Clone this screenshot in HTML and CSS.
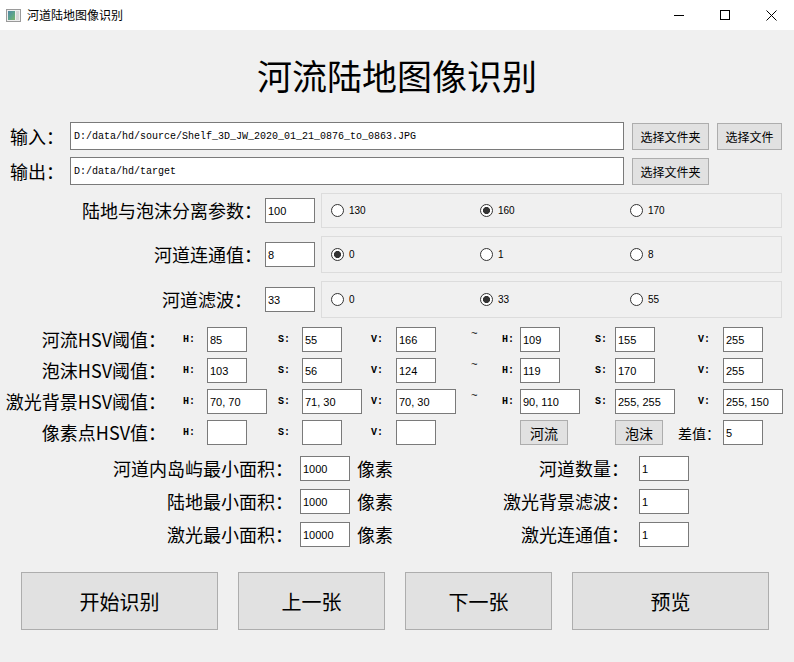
FILE: index.html
```html
<!DOCTYPE html>
<html lang="zh-CN">
<head>
<meta charset="utf-8">
<title>河道陆地图像识别</title>
<link rel="stylesheet" href="styles.css">
</head>
<body>
<div class="window">
  <header class="titlebar">
    <svg class="app-icon" width="15" height="13" viewBox="0 0 15 13">
      <defs>
        <linearGradient id="pic" x1="0" y1="0" x2="1" y2="1">
          <stop offset="0" stop-color="#4f86a6"/>
          <stop offset="0.55" stop-color="#5ea58a"/>
          <stop offset="1" stop-color="#7cb46a"/>
        </linearGradient>
      </defs>
      <rect x="0.5" y="0.5" width="14" height="12" fill="#eeeeee" stroke="#9a9a9a"/>
      <rect x="2" y="2" width="7" height="9" fill="url(#pic)"/>
      <rect x="10" y="2" width="3" height="9" fill="#d6d6d6"/>
    </svg>
    <span class="title-text">河道陆地图像识别</span>
    <div class="win-controls">
      <span class="win-btn"><svg width="10" height="10" viewBox="0 0 10 10"><path d="M0 5.5H10" stroke="#000" stroke-width="1"/></svg></span>
      <span class="win-btn"><svg width="10" height="10" viewBox="0 0 10 10"><rect x="0.5" y="0.5" width="9" height="9" fill="none" stroke="#000"/></svg></span>
      <span class="win-btn"><svg width="11" height="11" viewBox="0 0 11 11"><path d="M0.5 0.5L10.5 10.5M10.5 0.5L0.5 10.5" stroke="#000" stroke-width="1"/></svg></span>
    </div>
  </header>

  <main class="content">
    <h1 class="app-title">河流陆地图像识别</h1>

    <div class="path-row">
      <span class="path-label">输入：</span>
      <input class="field path-field" type="text" value="D:/data/hd/source/Shelf_3D_JW_2020_01_21_0876_to_0863.JPG">
      <button class="btn btn-small btn-folder">选择文件夹</button>
      <button class="btn btn-small btn-file">选择文件</button>
    </div>
    <div class="path-row">
      <span class="path-label">输出：</span>
      <input class="field path-field" type="text" value="D:/data/hd/target">
      <button class="btn btn-small btn-folder">选择文件夹</button>
    </div>

    <div class="param-row row-a">
      <span class="param-label">陆地与泡沫分离参数：</span>
      <input class="field num-field param-field" type="text" value="100">
      <div class="group">
        <label class="radio"><input type="radio" name="sep"><span>130</span></label>
        <label class="radio"><input type="radio" name="sep" checked><span>160</span></label>
        <label class="radio"><input type="radio" name="sep"><span>170</span></label>
      </div>
    </div>
    <div class="param-row row-b">
      <span class="param-label">河道连通值：</span>
      <input class="field num-field param-field" type="text" value="8">
      <div class="group">
        <label class="radio"><input type="radio" name="conn" checked><span>0</span></label>
        <label class="radio"><input type="radio" name="conn"><span>1</span></label>
        <label class="radio"><input type="radio" name="conn"><span>8</span></label>
      </div>
    </div>
    <div class="param-row row-c">
      <span class="param-label param-label-short">河道滤波：</span>
      <input class="field num-field param-field" type="text" value="33">
      <div class="group">
        <label class="radio"><input type="radio" name="filt"><span>0</span></label>
        <label class="radio"><input type="radio" name="filt" checked><span>33</span></label>
        <label class="radio"><input type="radio" name="filt"><span>55</span></label>
      </div>
    </div>

    <div class="hsv-grid">
      <span class="hsv-label">河流HSV阈值：</span>
      <span class="chan chan-first">H:</span><input class="field num-field" type="text" value="85">
      <span class="chan">S:</span><input class="field num-field" type="text" value="55">
      <span class="chan">V:</span><input class="field num-field" type="text" value="166">
      <span class="tilde">~</span>
      <span class="chan">H:</span><input class="field num-field" type="text" value="109">
      <span class="chan">S:</span><input class="field num-field" type="text" value="155">
      <span class="chan">V:</span><input class="field num-field" type="text" value="255">

      <span class="hsv-label">泡沫HSV阈值：</span>
      <span class="chan chan-first">H:</span><input class="field num-field" type="text" value="103">
      <span class="chan">S:</span><input class="field num-field" type="text" value="56">
      <span class="chan">V:</span><input class="field num-field" type="text" value="124">
      <span class="tilde">~</span>
      <span class="chan">H:</span><input class="field num-field" type="text" value="119">
      <span class="chan">S:</span><input class="field num-field" type="text" value="170">
      <span class="chan">V:</span><input class="field num-field" type="text" value="255">

      <span class="hsv-label">激光背景HSV阈值：</span>
      <span class="chan chan-first">H:</span><input class="field num-field wide" type="text" value="70, 70">
      <span class="chan">S:</span><input class="field num-field wide" type="text" value="71, 30">
      <span class="chan">V:</span><input class="field num-field wide" type="text" value="70, 30">
      <span class="tilde">~</span>
      <span class="chan">H:</span><input class="field num-field wide" type="text" value="90, 110">
      <span class="chan">S:</span><input class="field num-field wide" type="text" value="255, 255">
      <span class="chan">V:</span><input class="field num-field wide" type="text" value="255, 150">

      <span class="hsv-label">像素点HSV值：</span>
      <span class="chan chan-first">H:</span><input class="field num-field" type="text" value="">
      <span class="chan">S:</span><input class="field num-field" type="text" value="">
      <span class="chan">V:</span><input class="field num-field" type="text" value="">
      <span class="gap-cell"></span>
      <span class="gap-cell"></span>
      <button class="btn btn-pick">河流</button>
      <span class="gap-cell"></span>
      <div class="diff-cell">
        <button class="btn btn-pick">泡沫</button>
        <span class="diff-label">差值：</span>
      </div>
      <input class="field num-field" type="text" value="5">
    </div>

    <div class="area-grid">
      <span class="area-label">河道内岛屿最小面积：</span>
      <input class="field num-field area-field" type="text" value="1000">
      <span class="unit">像素</span>
      <span class="area-label">河道数量：</span>
      <input class="field num-field area-field-r" type="text" value="1">

      <span class="area-label">陆地最小面积：</span>
      <input class="field num-field area-field" type="text" value="1000">
      <span class="unit">像素</span>
      <span class="area-label">激光背景滤波：</span>
      <input class="field num-field area-field-r" type="text" value="1">

      <span class="area-label">激光最小面积：</span>
      <input class="field num-field area-field" type="text" value="10000">
      <span class="unit">像素</span>
      <span class="area-label">激光连通值：</span>
      <input class="field num-field area-field-r" type="text" value="1">
    </div>

    <div class="action-row">
      <button class="btn btn-big btn-wide">开始识别</button>
      <button class="btn btn-big btn-mid">上一张</button>
      <button class="btn btn-big btn-mid">下一张</button>
      <button class="btn btn-big btn-wide">预览</button>
    </div>
  </main>
</div>
</body>
</html>
```

FILE: styles.css
```css
* {
  box-sizing: border-box;
}

html, body {
  margin: 0;
  padding: 0;
}

body {
  width: 794px;
  height: 662px;
  overflow: hidden;
  background: #f0f0f0;
  font-family: "Noto Sans CJK SC", "Noto Sans", sans-serif;
  color: #000;
}

.window {
  width: 794px;
  height: 662px;
  display: flex;
  flex-direction: column;
}

/* ---------- title bar ---------- */
.titlebar {
  height: 30px;
  flex: none;
  background: #fff;
  display: flex;
  align-items: center;
}

.app-icon {
  margin-left: 6px;
  display: block;
}

.title-text {
  margin-left: 6px;
  font-size: 12px;
  line-height: 30px;
}

.win-controls {
  margin-left: auto;
  display: flex;
  height: 30px;
}

.win-btn {
  width: 46px;
  height: 30px;
  display: flex;
  align-items: center;
  justify-content: center;
}

.win-btn svg {
  display: block;
}

/* ---------- content ---------- */
.content {
  flex: 1;
}

.app-title {
  margin: 21px 0 0;
  height: 48px;
  line-height: 48px;
  font-size: 35px;
  font-weight: normal;
  text-align: center;
}

.field {
  margin: 0;
  border: 1px solid #7a7a7a;
  background: #fff;
  color: #000;
  outline: none;
  padding: 0 0 0 2px;
}

.num-field {
  height: 25px;
  width: 40px;
  font-family: "Liberation Sans", Arial, sans-serif;
  font-size: 11px;
}

.num-field.wide {
  width: 60px;
}

.btn {
  margin: 0;
  padding: 0;
  border: 1px solid #adadad;
  background: #e1e1e1;
  color: #000;
  font-family: "Noto Sans CJK SC", "Noto Sans", sans-serif;
}

/* ---------- path rows ---------- */
.path-row {
  display: flex;
  align-items: center;
  height: 28px;
  margin-top: 7px;
}

.app-title + .path-row {
  margin-top: 23px;
}

.path-label {
  width: 70px;
  padding-left: 10px;
  font-size: 18px;
  line-height: 28px;
}

.path-field {
  width: 554px;
  height: 28px;
  padding-left: 3px;
  font-family: "Liberation Mono", "Courier New", monospace;
  font-size: 10px;
}

.btn-small {
  height: 27px;
  margin-left: 8px;
  font-size: 12px;
}

.btn-folder {
  width: 77px;
}

.btn-file {
  width: 65px;
}

/* ---------- parameter rows with radio groups ---------- */
.param-row {
  display: flex;
  align-items: center;
  margin-top: 8px;
}

.row-a { height: 35px; }
.row-b { height: 37px; }
.row-c { height: 37px; }

.param-label {
  width: 262px;
  text-align: right;
  font-size: 18px;
  line-height: 25px;
}

.param-label-short {
  padding-right: 10px;
}

.param-field {
  width: 50px;
  margin-left: 3px;
}

.group {
  margin-left: 6px;
  width: 461px;
  height: 100%;
  border: 1px solid #dcdcdc;
  display: grid;
  grid-template-columns: 149px 150px auto;
  align-items: center;
  padding-left: 9px;
}

.radio {
  display: flex;
  align-items: center;
  font-family: "Liberation Sans", Arial, sans-serif;
  font-size: 10px;
}

.radio input {
  -webkit-appearance: none;
  appearance: none;
  margin: 0 5px 0 0;
  width: 13px;
  height: 13px;
  border: 1px solid #333;
  border-radius: 50%;
  background: #fff;
}

.radio input:checked {
  background: radial-gradient(circle, #333 0 3.3px, #fff 3.8px);
}

/* ---------- HSV threshold grid ---------- */
.hsv-grid {
  margin-top: 9px;
  display: grid;
  grid-template-columns: 170px 37px 71px 24px 69px 25px 75px 31px 18px 75px 20px 83px 25px auto;
  grid-template-rows: repeat(4, 25px);
  row-gap: 6px;
  align-items: center;
}

.hsv-label {
  text-align: right;
  padding-right: 4px;
  font-size: 18px;
  line-height: 25px;
  white-space: nowrap;
}

.chan {
  font-family: "Liberation Mono", "Courier New", monospace;
  font-size: 10px;
  font-weight: bold;
}

.chan-first {
  padding-left: 13px;
}

.tilde {
  align-self: start;
  font-family: "Liberation Mono", monospace;
  font-size: 11px;
  line-height: 12px;
  padding-top: 1px;
}

.btn-pick {
  width: 48px;
  height: 25px;
  font-size: 14px;
}

.diff-cell {
  grid-column: span 2;
  display: flex;
  align-items: center;
}

.diff-label {
  margin-left: 15px;
  font-size: 14px;
}

/* ---------- area grid ---------- */
.area-grid {
  margin-top: 11px;
  display: grid;
  grid-template-columns: 293px 57px 50px 229px auto;
  grid-template-rows: repeat(3, 25px);
  row-gap: 8px;
  align-items: center;
}

.area-label {
  text-align: right;
  font-size: 18px;
  line-height: 25px;
  white-space: nowrap;
}

.area-field {
  width: 50px;
  margin-left: 7px;
}

.area-field-r {
  width: 50px;
  margin-left: 10px;
}

.unit {
  padding-left: 7px;
  font-size: 18px;
  line-height: 25px;
}

/* ---------- action buttons ---------- */
.action-row {
  margin-top: 25px;
  padding-left: 21px;
  display: flex;
  gap: 20px;
}

.btn-big {
  height: 58px;
  font-size: 20px;
}

.btn-wide {
  width: 197px;
}

.btn-mid {
  width: 147px;
}
```
